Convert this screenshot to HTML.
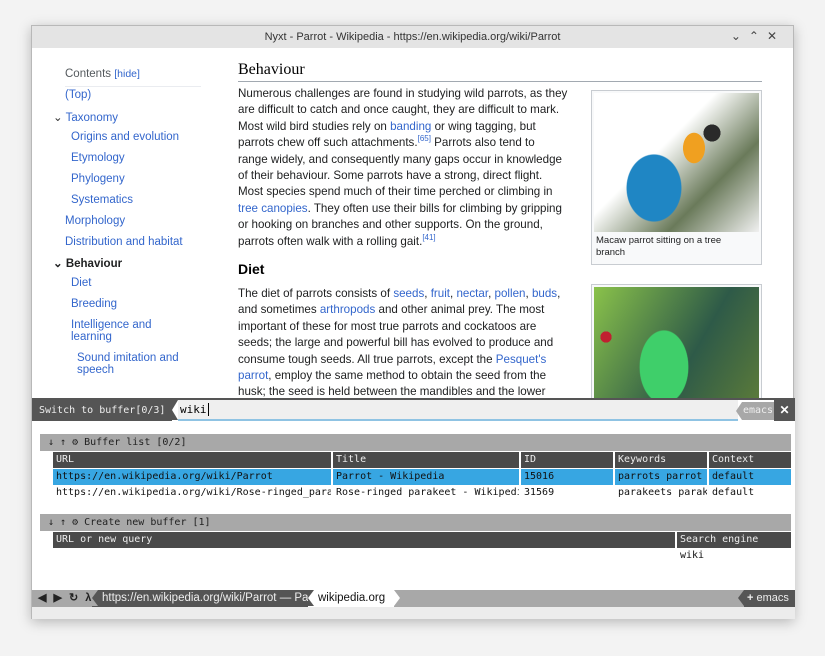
<!DOCTYPE html>
<html><head><meta charset="utf-8"><style>
*{margin:0;padding:0;box-sizing:border-box}
body{width:825px;height:656px;background:#f3f3f3;position:relative;overflow:hidden;font-family:"Liberation Sans",sans-serif}
.win{position:absolute;left:31px;top:25px;width:763px;height:594px;background:#fff;border:1px solid #b8b8b8;box-shadow:0 3px 12px rgba(0,0,0,.25)}
.tb{position:absolute;left:0;top:0;width:100%;height:22px;background:#e4e4e4;text-align:center;font-size:11px;line-height:22px;color:#333}
.ab{position:absolute}
.toc{font-size:11.5px;color:#3366cc;white-space:nowrap}
.p{position:absolute;left:206px;font-size:11.6px;color:#202122;line-height:16.4px;white-space:nowrap}
a{color:#3366cc;text-decoration:none}
sup{font-size:8px;vertical-align:5px;color:#3366cc;line-height:0}
.mono{font-family:"DejaVu Sans Mono","Liberation Mono",monospace;font-size:10px}
.hdr{position:absolute;background:#a8a8a8;height:17px;line-height:17px;color:#222;padding-left:8px}
.th{position:absolute;background:#4a4a4a;color:#eee;height:16px;line-height:16px;padding-left:3px;overflow:hidden;white-space:nowrap}
.td{position:absolute;height:16px;line-height:16px;padding-left:3px;overflow:hidden;white-space:nowrap;color:#111}
.sel{background:#37a6e2}
</style></head><body>
<div class="win">
<div class="tb">Nyxt - Parrot - Wikipedia - https://en.wikipedia.org/wiki/Parrot</div>
<div class="ab" style="right:8px;top:3px;font-size:12px;color:#444;letter-spacing:8px">⌄⌃✕</div>

<div class="ab toc" style="left:33px;top:42px;color:#54595d">Contents <span style="color:#3366cc;font-size:10.5px">[hide]</span></div>
<div class="ab" style="left:33px;top:60px;width:136px;border-top:1px solid #eaecf0"></div>
<div class="ab toc" style="left:33px;top:63px">(Top)</div>
<div class="ab toc" style="left:21px;top:84px"><span style="color:#333">⌄</span> Taxonomy</div>
<div class="ab toc" style="left:39px;top:105px">Origins and evolution</div>
<div class="ab toc" style="left:39px;top:126px">Etymology</div>
<div class="ab toc" style="left:39px;top:147px">Phylogeny</div>
<div class="ab toc" style="left:39px;top:168px">Systematics</div>
<div class="ab toc" style="left:33px;top:189px">Morphology</div>
<div class="ab toc" style="left:33px;top:210px">Distribution and habitat</div>
<div class="ab toc" style="left:21px;top:230px;color:#202122;font-weight:bold"><span>⌄</span> Behaviour</div>
<div class="ab toc" style="left:39px;top:251px">Diet</div>
<div class="ab toc" style="left:39px;top:272px">Breeding</div>
<div class="ab toc" style="left:39px;top:293px;line-height:12px">Intelligence and<br>learning</div>
<div class="ab toc" style="left:45px;top:326px;line-height:12px">Sound imitation and<br>speech</div>

<div class="ab" style="left:206px;top:35px;font-family:'Liberation Serif',serif;font-size:16px;color:#000">Behaviour</div>
<div class="ab" style="left:206px;top:55px;width:524px;border-top:1px solid #a2a9b1"></div>
<div class="p" style="top:60px">Numerous challenges are found in studying wild parrots, as they<br>are difficult to catch and once caught, they are difficult to mark.<br>Most wild bird studies rely on <a>banding</a> or wing tagging, but<br>parrots chew off such attachments.<sup>[65]</sup> Parrots also tend to<br>range widely, and consequently many gaps occur in knowledge<br>of their behaviour. Some parrots have a strong, direct flight.<br>Most species spend much of their time perched or climbing in<br><a>tree canopies</a>. They often use their bills for climbing by gripping<br>or hooking on branches and other supports. On the ground,<br>parrots often walk with a rolling gait.<sup>[41]</sup></div>
<div class="ab" style="left:206px;top:235px;font-size:14px;font-weight:bold;color:#000">Diet</div>
<div class="p" style="top:260px">The diet of parrots consists of <a>seeds</a>, <a>fruit</a>, <a>nectar</a>, <a>pollen</a>, <a>buds</a>,<br>and sometimes <a>arthropods</a> and other animal prey. The most<br>important of these for most true parrots and cockatoos are<br>seeds; the large and powerful bill has evolved to produce and<br>consume tough seeds. All true parrots, except the <a>Pesquet's</a><br><a>parrot</a>, employ the same method to obtain the seed from the<br>husk; the seed is held between the mandibles and the lower</div>

<div class="ab" style="left:559px;top:64px;width:171px;height:175px;background:#f8f9fa;border:1px solid #c8ccd1"></div>
<div class="ab" style="left:562px;top:67px;width:165px;height:139px;background:radial-gradient(ellipse 45px 55px at 60px 95px,#1f86c4 60%,transparent 62%),radial-gradient(ellipse 18px 25px at 100px 55px,#f0a020 60%,transparent 62%),radial-gradient(circle 14px at 118px 40px,#2a2a2a 60%,transparent 62%),linear-gradient(135deg,#fff 40%,#6a7a5a 70%,#f0f0f0)"></div>
<div class="ab" style="left:564px;top:209px;font-size:9.5px;color:#202122;line-height:12px">Macaw parrot sitting on a tree<br>branch</div>
<div class="ab" style="left:559px;top:258px;width:171px;height:150px;background:#f8f9fa;border:1px solid #c8ccd1"></div>
<div class="ab" style="left:562px;top:261px;width:165px;height:113px;background:radial-gradient(ellipse 40px 60px at 70px 80px,#3fcf6a 60%,transparent 62%),radial-gradient(circle 8px at 12px 50px,#c02030 70%,transparent 72%),linear-gradient(120deg,#8ac24a,#2e5a48 60%,#5a7a3a)"></div>

<!-- minibuffer -->
<div class="ab" style="left:0;top:372px;width:763px;height:202px;background:#fff"></div>
<div class="ab" style="left:0;top:372px;width:763px;height:2px;background:#555"></div>
<div class="ab mono" style="left:0;top:374px;width:140px;height:21px;background:#555;color:#eee;line-height:21px;padding-left:7px">Switch to buffer[0/3]</div>
<div class="ab" style="left:140px;top:374px;width:0;height:0;border-top:10.5px solid #555;border-bottom:10.5px solid #555;border-right:6px solid transparent"></div>
<div class="ab" style="left:146px;top:374px;width:560px;height:21px;background:#efefef;border-bottom:2px solid #8fc3e3"></div>
<div class="ab mono" style="left:148px;top:374px;line-height:20px;font-size:11px;color:#000">wiki<span style="border-left:1px solid #000;margin-left:1px"></span></div>
<div class="ab mono" style="left:710px;top:376px;width:32px;height:18px;background:#a8a8a8;color:#eee;line-height:18px;text-align:center">emacs</div>
<div class="ab" style="left:704px;top:376px;border-top:9px solid transparent;border-bottom:9px solid transparent;border-right:6px solid #a8a8a8"></div>
<div class="ab" style="left:742px;top:374px;width:21px;height:21px;background:#555;color:#fff;font-size:12px;font-weight:bold;line-height:21px;text-align:center">✕</div>

<div class="hdr mono" style="left:8px;top:408px;width:751px">↓ ↑ ⚙ Buffer list [0/2]</div>
<div class="th mono" style="left:21px;top:426px;width:278px">URL</div>
<div class="th mono" style="left:301px;top:426px;width:186px">Title</div>
<div class="th mono" style="left:489px;top:426px;width:92px">ID</div>
<div class="th mono" style="left:583px;top:426px;width:92px">Keywords</div>
<div class="th mono" style="left:677px;top:426px;width:82px">Context</div>
<div class="td mono sel" style="left:21px;top:443px;width:278px">https://en.wikipedia.org/wiki/Parrot</div>
<div class="td mono sel" style="left:301px;top:443px;width:186px">Parrot - Wikipedia</div>
<div class="td mono sel" style="left:489px;top:443px;width:92px">15016</div>
<div class="td mono sel" style="left:583px;top:443px;width:92px">parrots parrot</div>
<div class="td mono sel" style="left:677px;top:443px;width:82px">default</div>
<div class="td mono" style="left:21px;top:459px;width:278px">https://en.wikipedia.org/wiki/Rose-ringed_parakeet</div>
<div class="td mono" style="left:301px;top:459px;width:186px">Rose-ringed parakeet - Wikipedia</div>
<div class="td mono" style="left:489px;top:459px;width:92px">31569</div>
<div class="td mono" style="left:583px;top:459px;width:92px">parakeets parakeet</div>
<div class="td mono" style="left:677px;top:459px;width:82px">default</div>

<div class="hdr mono" style="left:8px;top:488px;width:751px">↓ ↑ ⚙ Create new buffer [1]</div>
<div class="th mono" style="left:21px;top:506px;width:622px">URL or new query</div>
<div class="th mono" style="left:645px;top:506px;width:114px">Search engine</div>
<div class="td mono" style="left:645px;top:522px;width:114px">wiki</div>

<!-- status -->
<div class="ab" style="left:0;top:564px;width:763px;height:17px;background:#a8a8a8"></div>
<div class="ab" style="left:6px;top:564px;font-size:11px;line-height:17px;color:#222;letter-spacing:2px;font-weight:bold">◀ ▶ ↻ λ</div>
<div class="ab" style="left:60px;top:564px;width:216px;height:17px;background:#555;color:#eee;font-size:11.5px;line-height:17px;padding-left:10px;overflow:hidden;white-space:nowrap">https://en.wikipedia.org/wiki/Parrot — Parrot</div>
<div class="ab" style="left:60px;top:564px;border-top:8.5px solid #a8a8a8;border-bottom:8.5px solid #a8a8a8;border-right:6px solid transparent;width:0"></div>
<div class="ab" style="left:276px;top:564px;width:86px;height:17px;background:#fff;color:#111;font-size:11.5px;line-height:17px;padding-left:10px">wikipedia.org</div>
<div class="ab" style="left:276px;top:564px;border-top:8.5px solid #555;border-bottom:8.5px solid #555;border-right:6px solid transparent;width:0"></div>
<div class="ab" style="left:362px;top:564px;border-top:8.5px solid transparent;border-bottom:8.5px solid transparent;border-left:6px solid #fff;width:0"></div>
<div class="ab" style="left:712px;top:564px;width:51px;height:17px;background:#555;color:#eee;font-size:11px;line-height:17px;padding-left:3px"><b>+</b> emacs</div>
<div class="ab" style="left:706px;top:564px;border-top:8.5px solid transparent;border-bottom:8.5px solid transparent;border-right:6px solid #555;width:0"></div>
<div class="ab" style="left:0;top:581px;width:763px;height:12px;background:#ececec"></div>
</div>
</body></html>
